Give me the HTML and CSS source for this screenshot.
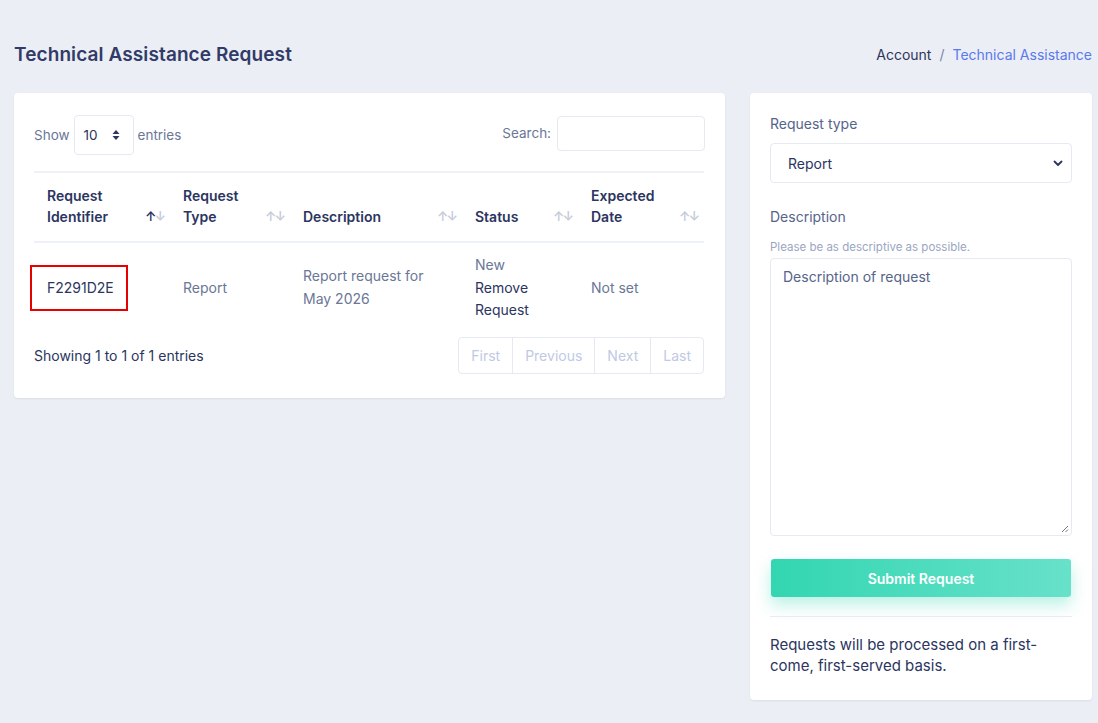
FILE: index.html
```html
<!DOCTYPE html>
<html lang="en">
<head>
<meta charset="utf-8">
<title>Technical Assistance Request</title>
<link rel="stylesheet" href="styles.css">
</head>
<body>
<div class="page">
  <header class="page-head">
    <h1 class="page-title">Technical Assistance Request</h1>
    <nav class="crumbs">
      <span class="crumb">Account</span>
      <span class="crumb-sep">/</span>
      <span class="crumb crumb-active">Technical Assistance</span>
    </nav>
  </header>

  <div class="layout">
    <section class="card list-card">
      <div class="dt-top">
        <label class="dt-length">Show
          <span class="len-select"><span>10</span>
            <svg class="updown" width="8" height="12" viewBox="0 0 8 12"><path d="M4 1 L7.5 5 H0.5 Z M4 11 L0.5 7 H7.5 Z" fill="#2b3560"/></svg>
          </span>
          entries</label>
        <label class="dt-search">Search: <span class="search-box"></span></label>
      </div>

      <table class="dt">
        <colgroup>
          <col style="width:136px"><col style="width:120px"><col style="width:172px"><col style="width:116px"><col style="width:126px">
        </colgroup>
        <thead>
          <tr>
            <th><div class="th-in"><span>Request<br>Identifier</span><span class="sort"><i class="on">↑</i><i>↓</i></span></div></th>
            <th><div class="th-in"><span>Request<br>Type</span><span class="sort"><i>↑</i><i>↓</i></span></div></th>
            <th><div class="th-in"><span>Description</span><span class="sort"><i>↑</i><i>↓</i></span></div></th>
            <th><div class="th-in"><span>Status</span><span class="sort"><i>↑</i><i>↓</i></span></div></th>
            <th><div class="th-in"><span>Expected<br>Date</span><span class="sort"><i>↑</i><i>↓</i></span></div></th>
          </tr>
        </thead>
        <tbody>
          <tr>
            <td><span class="req-id">F2291D2E</span></td>
            <td class="muted">Report</td>
            <td class="muted">Report request for May 2026</td>
            <td><span class="muted">New</span><br><span class="dark">Remove<br>Request</span></td>
            <td class="muted">Not set</td>
          </tr>
        </tbody>
      </table>

      <div class="dt-bottom">
        <div class="dt-info">Showing 1 to 1 of 1 entries</div>
        <div class="pager">
          <span class="pg">First</span><span class="pg">Previous</span><span class="pg">Next</span><span class="pg">Last</span>
        </div>
      </div>
    </section>

    <aside class="card form-card">
      <div class="field">
        <div class="label">Request type</div>
        <div class="select">
          <span>Report</span>
          <svg width="10" height="7" viewBox="0 0 10 7"><path d="M1.5 1.5 L5 5 L8.5 1.5" fill="none" stroke="#2b3560" stroke-width="1.8" stroke-linecap="round" stroke-linejoin="round"/></svg>
        </div>
      </div>
      <div class="field">
        <div class="label">Description</div>
        <div class="hint">Please be as descriptive as possible.</div>
        <div class="textarea">
          <span class="placeholder">Description of request</span>
          <svg class="grip" width="9" height="9" viewBox="0 0 9 9"><path d="M8 2 L2 8 M8 5.5 L5.5 8" stroke="#777" stroke-width="1"/></svg>
        </div>
      </div>
      <button class="submit" type="button">Submit Request</button>
      <hr class="rule">
      <p class="note">Requests will be processed on a first-come, first-served basis.</p>
    </aside>
  </div>
</div>
</body>
</html>
```

FILE: styles.css
```css
* { box-sizing: border-box; }

html, body {
  margin: 0;
  background: #ebeef4;
  font-family: "Inter", "Noto Sans", sans-serif;
  color: #2b3560;
}

.page {
  padding: 38px 6px 24px 14px;
}

.page-head {
  display: flex;
  justify-content: space-between;
  align-items: center;
  height: 32px;
}

.page-title {
  margin: 0;
  font-size: 19px;
  font-weight: 600;
  color: #313b68;
  letter-spacing: 0.1px;
}

.crumbs {
  display: flex;
  gap: 8px;
  font-size: 14px;
  color: #2b3560;
}
.crumb-sep { color: #7a86a6; }
.crumb-active { color: #5a79ee; }

.layout {
  display: flex;
  align-items: flex-start;
  gap: 25px;
  margin-top: 23px;
}

.card {
  background: #fff;
  border-radius: 4px;
  box-shadow: 0 1px 2px rgba(40, 50, 90, 0.08);
}

.list-card {
  width: 711px;
  padding: 22px 20px 24px;
}

.dt-top {
  display: flex;
  justify-content: space-between;
  align-items: center;
  font-size: 13.5px;
  color: #6a7796;
}
.dt-length, .dt-search {
  display: flex;
  align-items: center;
  gap: 4px;
}
.len-select {
  display: flex;
  align-items: center;
  justify-content: space-between;
  width: 60px;
  height: 40px;
  padding: 0 13px 0 9px;
  border: 1px solid #e6e9f1;
  border-radius: 4px;
  color: #2b3560;
}
.dt-search { gap: 6px; margin-top: -4px; }
.search-box {
  display: block;
  width: 148px;
  height: 35px;
  border: 1px solid #e6e9f1;
  border-radius: 4px;
}

.dt {
  width: 670px;
  border-collapse: collapse;
  table-layout: fixed;
  margin-top: 16px;
  font-size: 14px;
}
.dt thead th {
  text-align: left;
  font-weight: 600;
  color: #2b3560;
  border-top: 2px solid #eef1f7;
  border-bottom: 2px solid #eef1f7;
  padding: 12px 6px 14px 13px;
  line-height: 21px;
  vertical-align: bottom;
}
.th-in {
  display: flex;
  justify-content: space-between;
  align-items: flex-end;
}
.sort {
  display: flex;
  font-size: 13px;
  color: #c6ccdb;
  letter-spacing: -2px;
}
.sort i { font-style: normal; }
.sort i.on { color: #2b3560; }

.dt tbody td {
  padding: 11px 8px 13px 13px;
  line-height: 22.5px;
  vertical-align: middle;
}
.muted { color: #6a7796; }
.dark { color: #2b3560; }

.req-id {
  display: inline-block;
  margin-left: -17px;
  padding: 10px 12px 10px 15px;
  border: 2px solid #e60000;
  color: #2b3560;
}

.dt-bottom {
  display: flex;
  justify-content: space-between;
  align-items: center;
  margin-top: 2px;
}
.dt-info {
  font-size: 14px;
  color: #2b3560;
}
.pager {
  display: flex;
  margin-right: 1px;
  border: 1px solid #e6e9f1;
  border-radius: 4px;
  font-size: 14px;
  color: #c0c9e4;
}
.pg {
  padding: 0 12px;
  line-height: 35px;
  border-left: 1px solid #e6e9f1;
}
.pg:first-child { border-left: 0; }

.form-card {
  width: 342px;
  padding: 22px 20px 24px;
}
.field { margin-bottom: 25px; }
.field + .field { margin-bottom: 23px; }
.label {
  font-size: 14px;
  color: #56648a;
  margin-bottom: 11px;
}
.select {
  display: flex;
  justify-content: space-between;
  align-items: center;
  height: 40px;
  padding: 0 8px 0 17px;
  border: 1px solid #e6e9f1;
  border-radius: 4px;
  font-size: 14px;
  color: #2b3560;
}
.hint {
  font-size: 11.5px;
  color: #9aa6c2;
  margin-top: 15px;
  margin-bottom: 4px;
}
.textarea {
  position: relative;
  height: 278px;
  padding: 9px 12px;
  border: 1px solid #e6e9f1;
  border-radius: 4px;
  font-size: 14px;
  color: #56648a;
}
.grip {
  position: absolute;
  right: 2px;
  bottom: 2px;
}
.submit {
  display: block;
  width: 300px;
  height: 38px;
  margin: 0 0 0 1px;
  border: 0;
  border-radius: 3px;
  background: linear-gradient(90deg, #32d6b1, #68e1ca);
  color: #fff;
  font: 600 14px "Inter", "Noto Sans", sans-serif;
  box-shadow: 0 8px 16px rgba(60, 214, 180, 0.35);
}
.rule {
  margin: 19px 0 0;
  border: 0;
  border-top: 1px solid #e8ebf2;
}
.note {
  margin: 17px 0 0;
  font-size: 15px;
  line-height: 21px;
  color: #2b3560;
}
```
